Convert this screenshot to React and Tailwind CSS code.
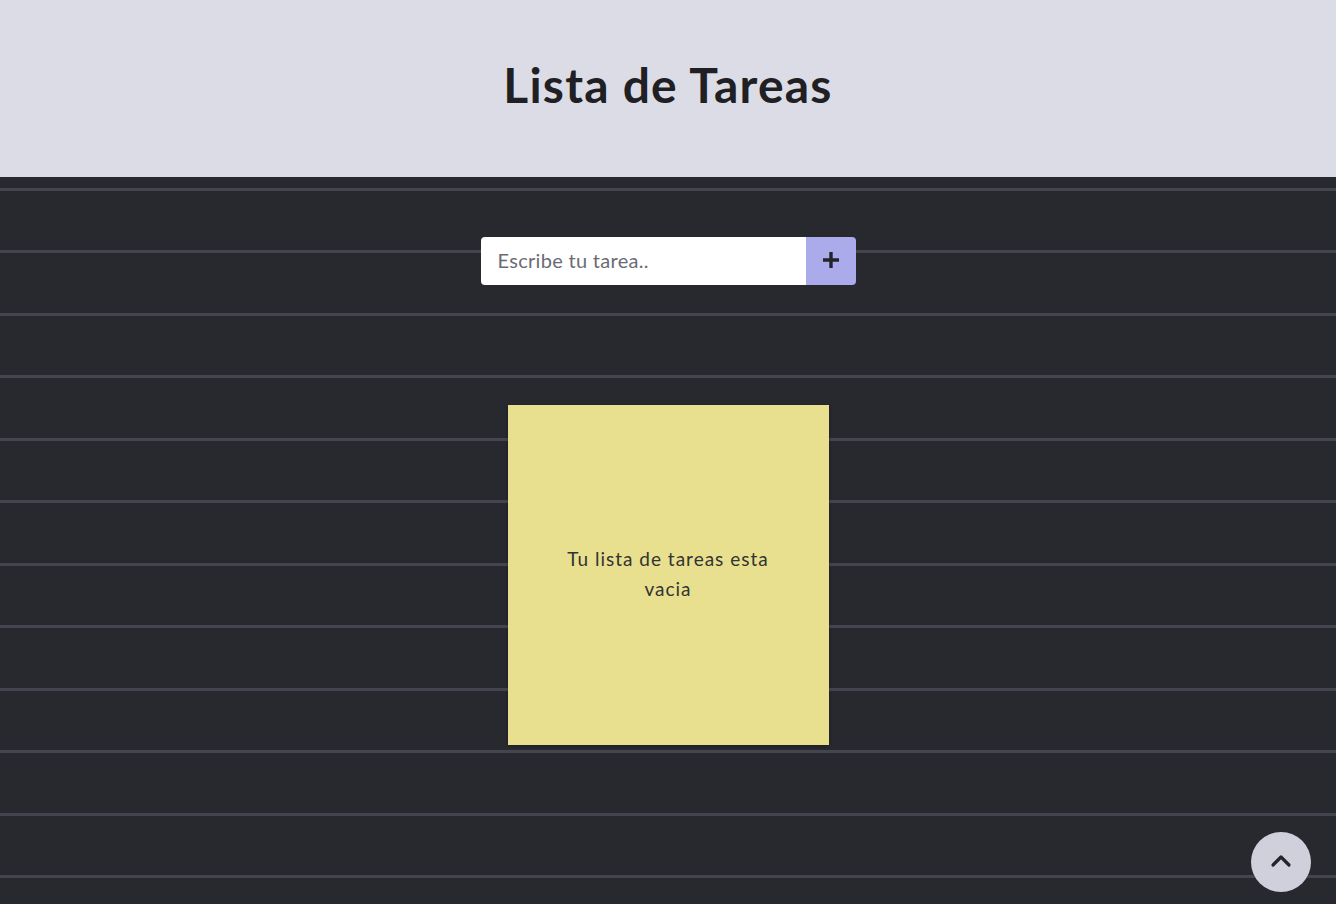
import React from "react";

export default function App() {
  return (
    <div className="w-[1336px] h-[904px] overflow-hidden relative font-['Lato','Noto_Sans',sans-serif]">
      <header className="h-[177px] bg-[#dcdce6] flex items-center justify-center">
        <h1 className="text-[48px] font-bold text-[#1f1f24] tracking-[1.2px] leading-none -mt-[8px]">
          Lista de Tareas
        </h1>
      </header>
      <main className="h-[727px] bg-[repeating-linear-gradient(to_bottom,#28282f_0px,#28282f_11px,#45454f_11px,#45454f_14px,#28282f_14px,#28282f_62.5px)] flex flex-col items-center">
        <form className="mt-[60px] flex w-[375px] h-[48px] rounded-[4px] overflow-hidden">
          <input
            type="text"
            placeholder="Escribe tu tarea.."
            className="flex-1 bg-white pl-[17px] pb-[3px] text-[20px] tracking-[0.3px] text-[#333] placeholder:text-[#6b6b75] outline-none"
          />
          <button type="button" className="w-[50px] bg-[#abaaea] flex items-center justify-center">
            <svg width="18" height="18" viewBox="0 0 18 18" className="-mt-[3px]">
              <path d="M9 1v16M1 9h16" stroke="#24242b" strokeWidth="3.4" />
            </svg>
          </button>
        </form>
        <div className="mt-[120px] w-[321px] h-[340px] bg-[#e8e08e] flex items-center justify-center shadow-[0_1px_3px_rgba(0,0,0,0.3)]">
          <p className="w-[230px] text-center text-[19px] leading-[30px] text-[#333] tracking-[1px] -mt-[2px]">
            Tu lista de tareas esta vacia
          </p>
        </div>
      </main>
      <button className="absolute left-[1251px] top-[832px] w-[60px] h-[60px] rounded-full bg-[#d0d0dc] flex items-center justify-center">
        <svg width="24" height="24" viewBox="0 0 24 24" fill="none" className="-mt-[2px]">
          <path d="M4 16l8-8 8 8" stroke="#24242b" strokeWidth="3.2" strokeLinecap="round" strokeLinejoin="round" />
        </svg>
      </button>
    </div>
  );
}
